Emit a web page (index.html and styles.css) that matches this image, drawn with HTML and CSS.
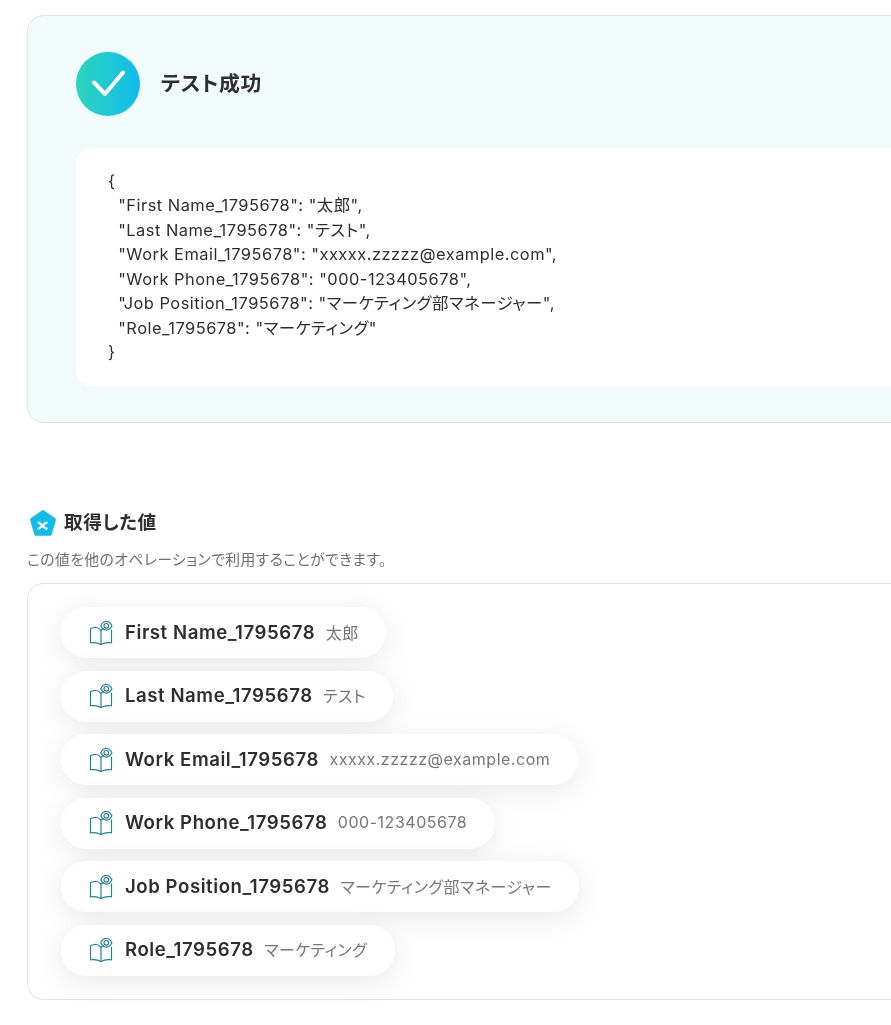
FILE: index.html
```html
<!DOCTYPE html>
<html lang="ja">
<head>
<meta charset="utf-8">
<title>テスト成功</title>
<link rel="stylesheet" href="styles.css">
</head>
<body>
<main class="page">
  <section class="result-card">
    <div class="result-head">
      <span class="check-badge">
        <svg width="34" height="28" viewBox="0 0 34 28" fill="none"><path d="M3 12.500 L14 24 L32 2.500" stroke="#fff" stroke-width="4" stroke-linecap="round" stroke-linejoin="round"/></svg>
      </span>
      <h1 class="result-title">テスト成功</h1>
    </div>
    <pre class="result-json">{
  "First Name_1795678": "太郎",
  "Last Name_1795678": "テスト",
  "Work Email_1795678": "xxxxx.zzzzz@example.com",
  "Work Phone_1795678": "000-123405678",
  "Job Position_1795678": "マーケティング部マネージャー",
  "Role_1795678": "マーケティング"
}</pre>
  </section>

  <section class="values">
    <div class="values-head">
      <svg class="pentagon" width="26" height="26" viewBox="0 0 26 26"><path d="M13 1.900 L24.100 9.800 L20 23.900 L6 23.900 L1.900 9.800 Z" fill="#12bdea" stroke="#12bdea" stroke-width="3.600" stroke-linejoin="round"/><path d="M8.600 12.600 C11 13 13.800 18.200 16.600 18.600 M16.600 12.600 C13.800 13 11 18.200 8.600 18.600" stroke="#fff" stroke-width="2.200" stroke-linecap="round" fill="none"/></svg>
      <h2 class="values-title">取得した値</h2>
    </div>
    <p class="values-note">この値を他のオペレーションで利用することができます。</p>
    <div class="values-card">
      <div class="pill"><svg class="book"><use href="#book"/></svg><span class="pill-key">First Name_1795678</span><span class="pill-val">太郎</span></div>
      <div class="pill"><svg class="book"><use href="#book"/></svg><span class="pill-key">Last Name_1795678</span><span class="pill-val">テスト</span></div>
      <div class="pill"><svg class="book"><use href="#book"/></svg><span class="pill-key">Work Email_1795678</span><span class="pill-val">xxxxx.zzzzz@example.com</span></div>
      <div class="pill"><svg class="book"><use href="#book"/></svg><span class="pill-key">Work Phone_1795678</span><span class="pill-val">000-123405678</span></div>
      <div class="pill"><svg class="book"><use href="#book"/></svg><span class="pill-key">Job Position_1795678</span><span class="pill-val">マーケティング部マネージャー</span></div>
      <div class="pill"><svg class="book"><use href="#book"/></svg><span class="pill-key">Role_1795678</span><span class="pill-val">マーケティング</span></div>
    </div>
  </section>
</main>
<svg class="defs" width="0" height="0">
  <symbol id="book" viewBox="0 0 24 24" fill="none" stroke="#1f7f9c" stroke-width="1.150" stroke-linejoin="round" stroke-linecap="round">
    <path d="M12 23.500 C9.500 22 5 21.300 1.500 21.800 V7.500 L6.500 6.300 C8.500 6.500 10.500 7.700 12 9.300 C12.700 8.500 13.500 8 14.500 7.700"/>
    <path d="M12 23.500 C14.500 22 19 21.300 22.500 21.800 V9"/>
    <path d="M12 9.300 V23.500"/>
    <circle cx="17.300" cy="4.800" r="2.300"/>
    <path d="M11.800 4.800 C13 1.800 15 .500 17.300 .500 C19.600 .500 21.600 1.800 22.900 4.800 C21.600 7.800 19.600 9.100 17.300 9.100 C15 9.100 13 7.800 11.800 4.800 Z"/>
  </symbol>
</svg>
</body>
</html>
```
FILE: styles.css
```css
* { box-sizing: border-box; }
html, body { margin: 0; padding: 0; }
body {
  width: 891px;
  height: 1025px;
  overflow: hidden;
  background: #fff;
  color: #2e2e2e;
  font-family: Inter, "Noto Sans CJK JP", sans-serif;
  font-feature-settings: "palt";
}
.page { width: 1100px; padding: 15px 0 0 27px; will-change: transform; }
.result-card {
  width: 1000px;
  height: 408px;
  padding: 36px 48px;
  background: #f1fbfa;
  border: 1px solid #e2e6e6;
  border-radius: 16px;
}
.result-head { display: flex; align-items: center; gap: 21px; margin-bottom: 32px; }
.check-badge {
  display: flex;
  align-items: center;
  justify-content: center;
  width: 64px;
  height: 64px;
  border-radius: 50%;
  background: linear-gradient(90deg, #2cd6bd, #12bbec);
}
.result-title { margin: 0; font-size: 20.8px; font-weight: 700; line-height: 1.5; letter-spacing: .03em; }
.result-json {
  margin: 0;
  padding: 20.5px 32px 21.5px;
  background: #fff;
  border-radius: 16px;
  font-family: inherit;
  font-size: 16.4px;
  letter-spacing: .5px;
  line-height: 24.5px;
  color: #2e2e2e;
}
.values { margin-top: 87px; }
.values-head { display: flex; align-items: center; gap: 8px; padding-left: 3px; height: 26px; }
.values-title { margin: 0 0 2px; font-size: 18.6px; font-weight: 700; line-height: 24px; letter-spacing: .03em; }
.values-note { margin: 14px 0 0; font-size: 14.8px; line-height: 20px; color: #6f6f6f; letter-spacing: .03em; }
.values-card {
  width: 1000px;
  height: 417px;
  margin-top: 13px;
  padding: 23px 33px;
  display: flex;
  flex-direction: column;
  align-items: flex-start;
  gap: 12.5px;
  border: 1px solid #e2e6e6;
  border-radius: 16px;
}
.pill {
  display: flex;
  align-items: center;
  height: 51.4px;
  padding: 0 27.5px 2px 28px;
  background: #fff;
  border-radius: 26px;
  box-shadow: 0 6px 30px rgba(0, 0, 0, .09);
}
.book { width: 24px; height: 24px; margin: 2px 12px 0 0; flex: none; }
.pill-key { font-size: 18.6px; font-weight: 600; color: #2e2e2e; letter-spacing: .03em; }
.pill-val { margin-left: 10.5px; font-size: 16px; color: #777; letter-spacing: .52px; }
.defs { position: absolute; }
```
